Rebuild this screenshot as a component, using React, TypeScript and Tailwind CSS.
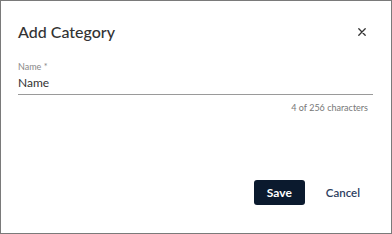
import React from 'react';

const CloseIcon: React.FC = () => (
    <svg width="8" height="8" viewBox="0 0 8 8" fill="none" stroke="#333" strokeWidth="1.3" strokeLinecap="round">
        <path d="M0.8 0.8 L7.2 7.2 M7.2 0.8 L0.8 7.2" />
    </svg>
);

const App: React.FC = () => {
    return (
        <div className="w-[392px] h-[234px] bg-white border border-[#7a7a7a] flex flex-col font-['Lato',sans-serif]">
            <div className="flex items-center justify-between pl-[17px] pr-[25px] pt-[20px]">
                <h2 className="text-[16px] leading-[22px] font-medium text-[#333]">Add Category</h2>
                <button className="p-0">
                    <CloseIcon />
                </button>
            </div>

            <div className="pl-[17px] pr-[18px] mt-[18px]">
                <label className="block text-[9px] leading-[12px] text-[#888]">Name *</label>
                <div className="text-[12px] leading-[16px] text-[#333] pt-[2px] pb-[3px] border-b border-[#9a9a9a]">Name</div>
                <div className="text-right text-[9px] leading-[12px] text-[#777] mt-[7px] pr-[5px]">4 of 256 characters</div>
            </div>

            <div className="flex-1" />

            <div className="flex items-center justify-end gap-[21px] pr-[31px] pb-[28px]">
                <button className="w-[51px] h-[25px] rounded-[3px] bg-[#0b1a2e] text-white text-[12px] font-bold">Save</button>
                <button className="text-[11.5px] font-semibold text-[#2e3f5f]">Cancel</button>
            </div>
        </div>
    );
};

export default App;
